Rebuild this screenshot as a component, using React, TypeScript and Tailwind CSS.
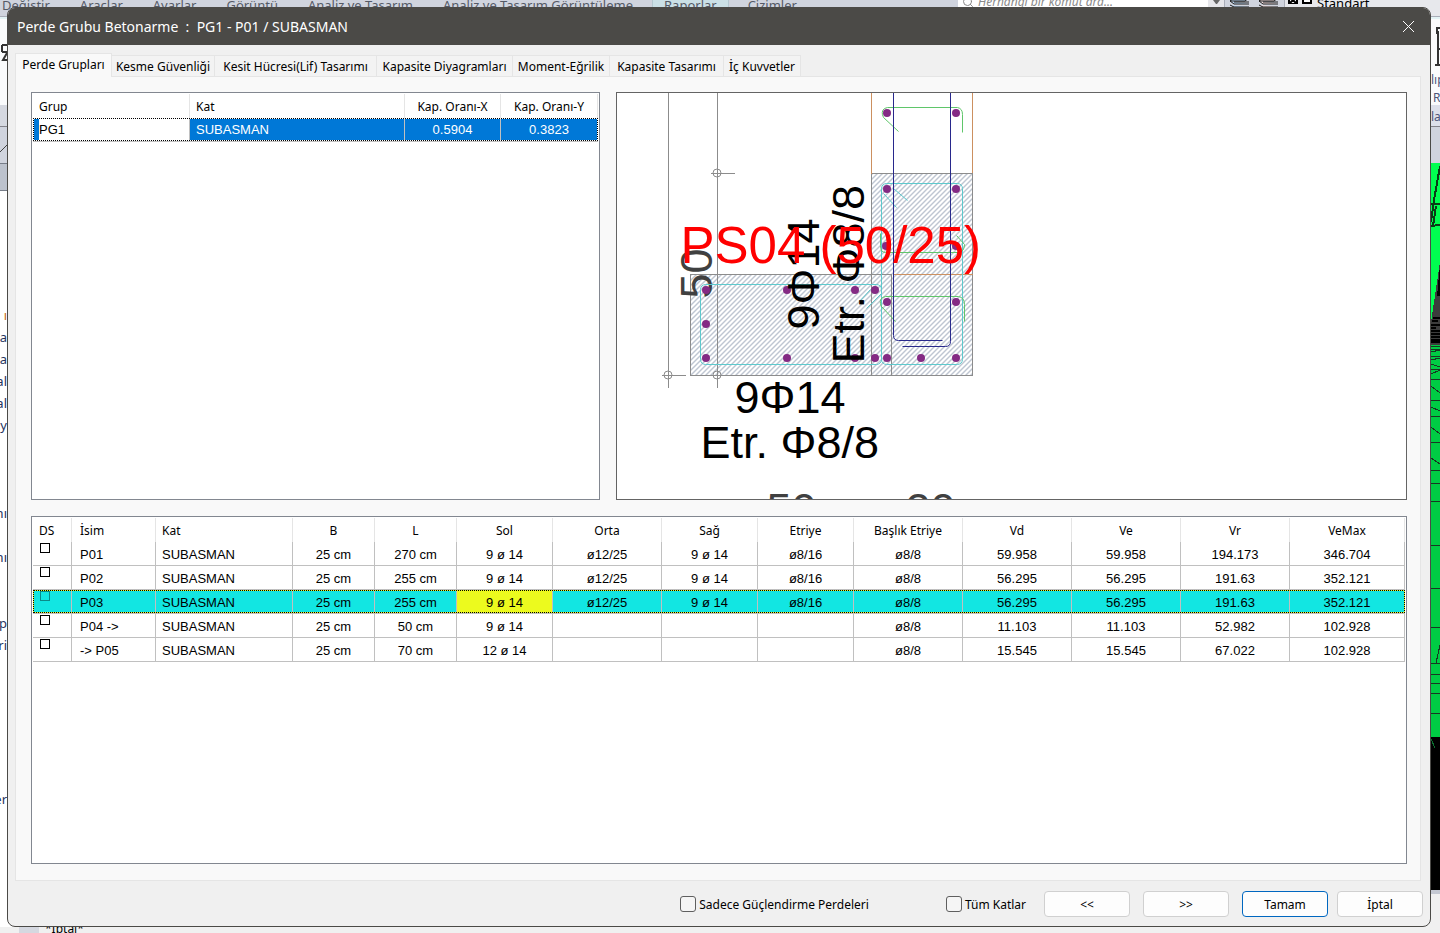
import { useState } from "react";
import clsx from "clsx";
import { Search } from "lucide-react";

const ribbonTabs = ["Değiştir", "Araçlar", "Ayarlar", "Görüntü", "Analiz ve Tasarım", "Analiz ve Tasarım Görüntüleme", "Raporlar", "Çizimler"];

// one entry per 22px line of the project tree
const treeLines = ["ı", "la", "la", "al", "al", "y", "", "", "", "nı", "", "nı", "", "", "p", "ri", "", "", "", "", "", "", "er"];

const tabs = [
    { label: "Perde Grupları", width: "w-[97px]" },
    { label: "Kesme Güvenliği", width: "w-[103px]" },
    { label: "Kesit Hücresi(Lif) Tasarımı", width: "w-[162px]" },
    { label: "Kapasite Diyagramları", width: "w-[136px]" },
    { label: "Moment-Eğrilik", width: "w-[97px]" },
    { label: "Kapasite Tasarımı", width: "w-[114px]" },
    { label: "İç Kuvvetler", width: "w-[77px]" }
];

const columns = [
    { label: "DS", width: "w-[39px]" },
    { label: "İsim", width: "w-[84px]" },
    { label: "Kat", width: "w-[137px]" },
    { label: "B", width: "w-[82px]" },
    { label: "L", width: "w-[82px]" },
    { label: "Sol", width: "w-[96px]" },
    { label: "Orta", width: "w-[109px]" },
    { label: "Sağ", width: "w-[96px]" },
    { label: "Etriye", width: "w-[96px]" },
    { label: "Başlık Etriye", width: "w-[109px]" },
    { label: "Vd", width: "w-[109px]" },
    { label: "Ve", width: "w-[109px]" },
    { label: "Vr", width: "w-[109px]" },
    { label: "VeMax", width: "w-[115px]" }
];

const walls = [
    ["P01", "SUBASMAN", "25 cm", "270 cm", "9 ø 14", "ø12/25", "9 ø 14", "ø8/16", "ø8/8", "59.958", "59.958", "194.173", "346.704"],
    ["P02", "SUBASMAN", "25 cm", "255 cm", "9 ø 14", "ø12/25", "9 ø 14", "ø8/16", "ø8/8", "56.295", "56.295", "191.63", "352.121"],
    ["P03", "SUBASMAN", "25 cm", "255 cm", "9 ø 14", "ø12/25", "9 ø 14", "ø8/16", "ø8/8", "56.295", "56.295", "191.63", "352.121"],
    ["P04 ->", "SUBASMAN", "25 cm", "50 cm", "9 ø 14", "", "", "", "ø8/8", "11.103", "11.103", "52.982", "102.928"],
    ["-> P05", "SUBASMAN", "25 cm", "70 cm", "12 ø 14", "", "", "", "ø8/8", "15.545", "15.545", "67.022", "102.928"]
];

const rebars = [
    [887, 113], [956, 113], [887, 189], [956, 189], [886, 246], [956, 246],
    [706, 290], [787, 290], [855, 290], [875, 290], [706, 324],
    [706, 358], [787, 358], [855, 358], [875, 358], [887, 358], [921, 358], [956, 358],
    [887, 302], [956, 302]
];

const StackIcon = ({ fill }: { fill: string }) => (
    <svg width="22" height="8" fill={fill} stroke="#1c1c1c">
        <path d="M5 -2H20L16 1H1ZM5 2H20M1 1L5 4H20M1 5L5 7H20" />
    </svg>
);

const Ribbon = () => (
    <div className="flex h-[17px] items-start overflow-hidden border-b border-[#a9adb8] bg-[#d0d4de] text-[13px] leading-[14px] text-[#555a66]">
        <div className="flex w-[958px] shrink-0 -translate-y-0.5">
            {ribbonTabs.map((label) => (
                <span
                    key={label}
                    className={clsx(
                        "whitespace-nowrap",
                        label === "Değiştir" ? "pl-0.5 pr-[15px]" : label === "Raporlar" ? "border-x border-[#b4c8d0] bg-[#cbe0e6] px-[11px] mx-1" : "px-[15px]"
                    )}
                >
                    {label}
                </span>
            ))}
        </div>
        <div className="flex h-4 w-[250px] shrink-0 items-start gap-1 overflow-hidden bg-white pl-1 italic text-[#8a8a8a]">
            <Search className="h-3 w-3 -translate-y-1" />
            <span className="-translate-y-1.5 text-xs leading-4">Herhangi bir komut ara...</span>
        </div>
        <div className="flex h-4 w-4 shrink-0 justify-center bg-[#e6e6ea]">
            <svg width="7" height="5" fill="#666">
                <path d="M0 0H7L4 4H3Z" />
            </svg>
        </div>
        <div className="flex h-4 w-[61px] shrink-0 justify-around border-x border-[#a9adb8]">
            <StackIcon fill="#b8d4f0" />
            <StackIcon fill="#f0dcdc" />
        </div>
        <div className="flex h-4 flex-1 items-start gap-1 bg-[#e7e8ec] pl-0.5 text-black">
            <svg width="26" height="5" fill="#fff" stroke="#000" strokeWidth="2">
                <path d="M2 -2H10V3H2ZM16 -2H24V3H16Z" />
                <path d="M3 3L6 0L9 3" />
            </svg>
            <span className="-translate-y-1">Standart</span>
        </div>
    </div>
);

const ModelView = () => (
    <svg className="block w-full" height="770" viewBox="0 163 9 770" preserveAspectRatio="none" shapeRendering="crispEdges">
        <rect y="163" width="9" height="182" fill="#00ff50" />
        <path d="M9 262L0 322V345H9Z" fill="#3c3c3c" />
        <path d="M9 265L6 296H9Z" fill="#000" />
        <path d="M9 166L3 200L0 222M0 204H9M2 226L5 206M0 226L9 225" stroke="#0a3b16" strokeWidth="2" fill="none" />
        <path d="M2 318H9M1 321H7M0 325H9M0 328H5M0 331H9M0 334H9M0 337H9M0 340H9M0 342H9" stroke="#000" strokeWidth="2" fill="none" />
        <rect y="345" width="9" height="392" fill="#00cc44" />
        <path d="M0 346H9M0 349H9M0 352L9 350M0 356H9M0 360L9 358M0 364L9 367M0 369H9M0 374L9 370M0 379H9M0 386L9 393M0 400H9M0 407L9 411M0 416H9M0 427L9 434M0 442H9M0 458L9 464M0 470H9M0 483H9M0 501H9M0 545H9M0 588L9 589M0 627H9M0 663H9M9 645L5 663M0 674H9M0 683H9M0 693H9M0 713H9" stroke="#183822" fill="none" />
        <rect y="737" width="9" height="153" fill="#000" />
        <path d="M0 739L4 748" stroke="#0b7030" />
        <rect y="890" width="9" height="43" fill="#f0f0f0" />
        <rect y="890" width="9" height="4" fill="#c4c8d2" />
    </svg>
);

// the main application window, visible only around the dialog
const Backdrop = () => (
    <div className="absolute inset-0 flex flex-col bg-[#f0f0f0]" aria-hidden="true">
        <Ribbon />
        <div className="flex min-h-0 flex-1 justify-between overflow-hidden">
            <div className="w-5 overflow-hidden bg-white">
                <div className="h-[88px] border-t-2 border-[#e3f3f5] bg-[#fafbfc] pt-6">
                    <svg width="7" height="20" fill="none" stroke="#333" strokeWidth="2">
                        <path d="M2 2h5M2 2v7M2 9h5M7 10l-4 7h4" />
                    </svg>
                </div>
                <div className="h-[22px] border-b border-[#83838b] bg-[#d5d8e0]" />
                <div className="h-[36px] bg-[#d0d4de]">
                    <svg width="8" height="28" stroke="#444">
                        <path d="M0 25L8 17" />
                    </svg>
                </div>
                <div className="h-[28px] border-y border-[#777d88] bg-[#bcc2cd]" />
                <div className="h-[113px]" />
                {treeLines.map((line, i) => (
                    <div key={i} className={clsx("flex h-[22px] w-[7px] justify-end text-[13px] leading-[22px]", i === 0 ? "text-[#c26a10]" : "text-[#26345e]")}>
                        {line}
                    </div>
                ))}
            </div>
            <div className="w-[9px] overflow-hidden bg-[#d0d4de]">
                <div className="h-[88px] overflow-hidden border-t-2 border-[#e3f3f5] bg-[#fafbfc] text-xs leading-[18px] text-[#4d5578]">
                    <svg className="mb-1 ml-1 mt-2" width="5" height="40" fill="none" stroke="#333" strokeWidth="2">
                        <path d="M5 1H2v6M3 4v34M0 38h5M3 22h2" />
                    </svg>
                    <div>lıp</div>
                    <div className="pl-0.5">R</div>
                </div>
                <div className="h-[22px] overflow-hidden border-b border-[#83838b] bg-[#dde0ea] text-xs leading-6 text-[#4d5578]">la</div>
                <div className="h-9" />
                <ModelView />
            </div>
        </div>
        <div className="flex h-1.5 overflow-hidden pl-[19px]">
            <div className="w-5 bg-[#d5d8e0]" />
            <div className="flex-1 pl-1.5 text-xs leading-none -translate-y-1">*İptal*</div>
        </div>
    </div>
);

// dotted focus rectangle over the current row
const FocusRect = ({ color }: { color: string }) => (
    <div className={clsx("pointer-events-none absolute inset-x-0 bottom-px top-0 border before:absolute before:-inset-px before:border before:border-dotted before:border-black", color)} />
);

const GroupTable = () => (
    <table className="w-full table-fixed border-separate border-spacing-0 text-xs">
        <thead>
            <tr className="h-6 [&>th]:border-r [&>th]:border-[#e5e5e5] [&>th]:px-0 [&>th]:pb-0 [&>th]:pt-0.5 [&>th]:font-normal">
                <th className="w-[157px] text-left"><span className="pl-1.5">Grup</span></th>
                <th className="w-[215px] text-left"><span className="pl-1.5">Kat</span></th>
                <th className="w-[96px]">Kap. Oranı-X</th>
                <th className="w-[97px]">Kap. Oranı-Y</th>
            </tr>
        </thead>
        <tbody className="font-['Liberation_Sans',Arial,sans-serif] text-[13px]">
            <tr className="relative h-6 text-white [&>td]:border-b [&>td]:border-r [&>td]:border-[#c0c0c0] [&>td]:bg-[#0078d7] [&>td]:p-0">
                <td>
                    <div className="ml-1.5 bg-white pt-px leading-[22px] text-black">PG1</div>
                    <FocusRect color="border-white" />
                </td>
                <td><div className="pl-1.5 pt-px">SUBASMAN</div></td>
                <td><div className="pt-px text-center">0.5904</div></td>
                <td><div className="pt-px text-center">0.3823</div></td>
            </tr>
        </tbody>
    </table>
);

const WallTable = () => {
    const [selected, setSelected] = useState(2);

    return (
        <table className="w-full table-fixed border-separate border-spacing-0 text-xs">
            <thead>
                <tr className="h-6">
                    {columns.map((col, i) => (
                        <th
                            key={col.label}
                            className={clsx(col.width, "border-r border-[#e5e5e5] pb-0 pr-0 pt-0.5 font-normal", i === 1 ? "pl-2 text-left" : i < 3 ? "pl-1.5 text-left" : "pl-0")}
                        >
                            {col.label}
                        </th>
                    ))}
                </tr>
            </thead>
            <tbody className="font-['Liberation_Sans',Arial,sans-serif] text-[13px]">
                {walls.map((wall, row) => (
                    <tr key={wall[0]} onClick={() => setSelected(row)} className={clsx("relative h-6", row === selected && "bg-[#12e6e2]")}>
                        <td className="border-b border-r border-[#c0c0c0] p-0 align-top">
                            <input
                                type="checkbox"
                                aria-label={wall[0]}
                                className={clsx("ml-[7px] mt-px block size-2.5 appearance-none border checked:bg-black", row === selected ? "border-[#0b8a88]" : "border-black")}
                            />
                            {row === selected && <FocusRect color="border-[#ecfa1e]" />}
                        </td>
                        {wall.map((value, i) => (
                            <td
                                key={i}
                                className={clsx(
                                    "border-b border-r border-[#c0c0c0] pb-0 pr-0 pt-0.5",
                                    i === 0 ? "pl-2" : i === 1 ? "pl-1.5" : "pl-0 text-center",
                                    i === 4 && row === selected && "bg-[#ecfa1e]"
                                )}
                            >
                                {value}
                            </td>
                        ))}
                    </tr>
                ))}
            </tbody>
        </table>
    );
};

const SectionDrawing = () => (
    <svg className="block h-full w-full" viewBox="616.5 92.5 789 406" preserveAspectRatio="xMinYMin slice" fill="none" fontFamily="'Liberation Sans', Arial, sans-serif">
        <defs>
            <pattern id="hatch" width="5" height="5" patternUnits="userSpaceOnUse">
                <path d="M-1 6L6 -1M-1 1L1 -1M4 6L6 4" stroke="#6f7f9a" strokeWidth="0.9" />
            </pattern>
        </defs>

        {/* concrete */}
        <path d="M871 173H972V375H690V274H871Z" fill="url(#hatch)" />

        <g shapeRendering="crispEdges">
            {/* axes */}
            <path d="M668 92V387M717 92V387M710 173H734M661 375H685" stroke="#8c8c8c" />
            <path d="M871 92V173M972 92V173" stroke="#cc9060" />
            <path d="M871 173H972V375H690V274H891V375M871 173V375" stroke="#8c8c8c" />
            <path d="M892 274H972" stroke="#cc9060" />
        </g>
        <g stroke="#8c8c8c">
            <circle cx="716.5" cy="172.5" r="4" />
            <circle cx="667.5" cy="374.5" r="4" />
            <circle cx="716.5" cy="374.5" r="4" />
        </g>

        {/* 50 dimension under the rebars */}
        <text transform="translate(711 298) rotate(-90)" fontSize="45" fill="#404040">50</text>

        {/* stirrups */}
        <g stroke="#5cc9cd">
            <rect x="881" y="183" width="81" height="181" rx="5" />
            <rect x="700" y="284" width="181" height="80" rx="5" />
            <path d="M893 188L907 200M883 193L896 207M881 293L866 308M870 289L859 301" />
        </g>
        <g stroke="#5fc66a">
            <path d="M898 131L883 117Q880 111 884 108L887 107H957Q962 108 962 114V132" />
            <path d="M880 233V245Q880 252 885 252H958Q964 251 964 244L956 235" />
            <path d="M895 321L881 306Q878 300 882 297L885 296H958Q964 297 964 304V321" />
        </g>
        <g stroke="#28288c">
            <path d="M893 92V335Q893 340 898 340H942M950 92V341Q950 346 945 346H902" />
        </g>
        <g fill="#842a84">
            {rebars.map(([x, y]) => (
                <circle key={`${x}-${y}`} cx={x - 0.5} cy={y - 0.5} r="4" />
            ))}
        </g>

        {/* labels */}
        <g fontSize="45" fill="#000">
            <text transform="translate(818 329) rotate(-90)">9Φ14</text>
            <text transform="translate(863 363) rotate(-90)">Etr. Φ8/8</text>
            <text x="734" y="412">9Φ14</text>
            <text x="700" y="457">Etr. Φ8/8</text>
            <text x="766" y="524" fill="#404040">50</text>
            <text x="905" y="524" fill="#404040">20</text>
        </g>
        <text x="680" y="262" fontSize="51" fill="#f00">PS04 (50/25)</text>
    </svg>
);

const FooterButton = ({ label, primary }: { label: string; primary?: boolean }) => (
    <button type="button" className={clsx("h-[26px] w-[86px] rounded border bg-[#fdfdfd] pt-0.5", primary ? "border-[#0067c0]" : "border-[#d0d0d0]")}>
        {label}
    </button>
);

const FooterCheck = ({ label }: { label: string }) => (
    <label className="flex items-center gap-[3px] whitespace-nowrap">
        <input type="checkbox" className="size-4 appearance-none rounded-[3px] border border-[#5f5f5f] bg-[#f5f5f5] checked:bg-[#0067c0]" />
        <span className="pt-0.5">{label}</span>
    </label>
);

export default function App() {
    const [active, setActive] = useState(0);

    return (
        <div className="relative h-screen overflow-hidden pb-1.5 pl-[7px] pr-[9px] pt-[7px] font-['Noto_Sans',Tahoma,sans-serif] text-xs text-black">
            <Backdrop />

            <div role="dialog" aria-labelledby="dialog-title" className="relative flex h-full flex-col overflow-hidden rounded-lg border border-[#4b4a47] bg-[#f0f0f0]">
                <header className="flex h-[37px] shrink-0 items-center justify-between bg-[#4b4a47] pl-[9px] pr-[15px] text-white">
                    <h1 id="dialog-title" className="whitespace-pre text-sm">
                        {"Perde Grubu Betonarme  :  PG1 - P01 / SUBASMAN"}
                    </h1>
                    <button type="button" aria-label="Kapat">
                        <svg width="13" height="13" stroke="currentColor">
                            <path d="M1 1L12 12M12 1L1 12" />
                        </svg>
                    </button>
                </header>

                <div className="flex min-h-0 flex-1 flex-col pl-[7px] pr-[9px] pt-2">
                    <div role="tablist" className="relative z-10 -mb-px flex items-end">
                        {tabs.map((tab, i) => (
                            <button
                                key={tab.label}
                                type="button"
                                role="tab"
                                aria-selected={i === active}
                                onClick={() => setActive(i)}
                                className={clsx(
                                    tab.width,
                                    "whitespace-nowrap border-[#e5e5e5] text-center",
                                    i === active ? "h-6 border-x border-t bg-[#f9f9f9] pb-0.5" : "h-[22px] border-y border-r bg-[#f3f3f3] pt-0.5"
                                )}
                            >
                                {tab.label}
                            </button>
                        ))}
                    </div>

                    <main className="grid min-h-0 flex-1 grid-rows-[408fr_348fr] gap-4 border border-[#e5e5e5] bg-[#f9f9f9] pb-4 pl-[15px] pr-[13px] pt-[15px]">
                        <div className="flex min-h-0 gap-4">
                            <section className="w-[569px] shrink-0 border border-[#828790] bg-white p-px">
                                <GroupTable />
                            </section>
                            <section className="min-w-0 flex-1 overflow-hidden border border-[#646464] bg-white">
                                <SectionDrawing />
                            </section>
                        </div>
                        <section className="min-h-0 border border-[#828790] bg-white p-px">
                            <WallTable />
                        </section>
                    </main>
                </div>

                <footer className="flex h-[45px] shrink-0 items-center justify-end pr-[7px]">
                    <FooterCheck label="Sadece Güçlendirme Perdeleri" />
                    <div className="ml-[77px] mr-[18px]">
                        <FooterCheck label="Tüm Katlar" />
                    </div>
                    <div className="flex gap-[13px]">
                        <FooterButton label="<<" />
                        <FooterButton label=">>" />
                        <div className="flex gap-[9px]">
                            <FooterButton label="Tamam" primary />
                            <FooterButton label="İptal" />
                        </div>
                    </div>
                </footer>
            </div>
        </div>
    );
}
